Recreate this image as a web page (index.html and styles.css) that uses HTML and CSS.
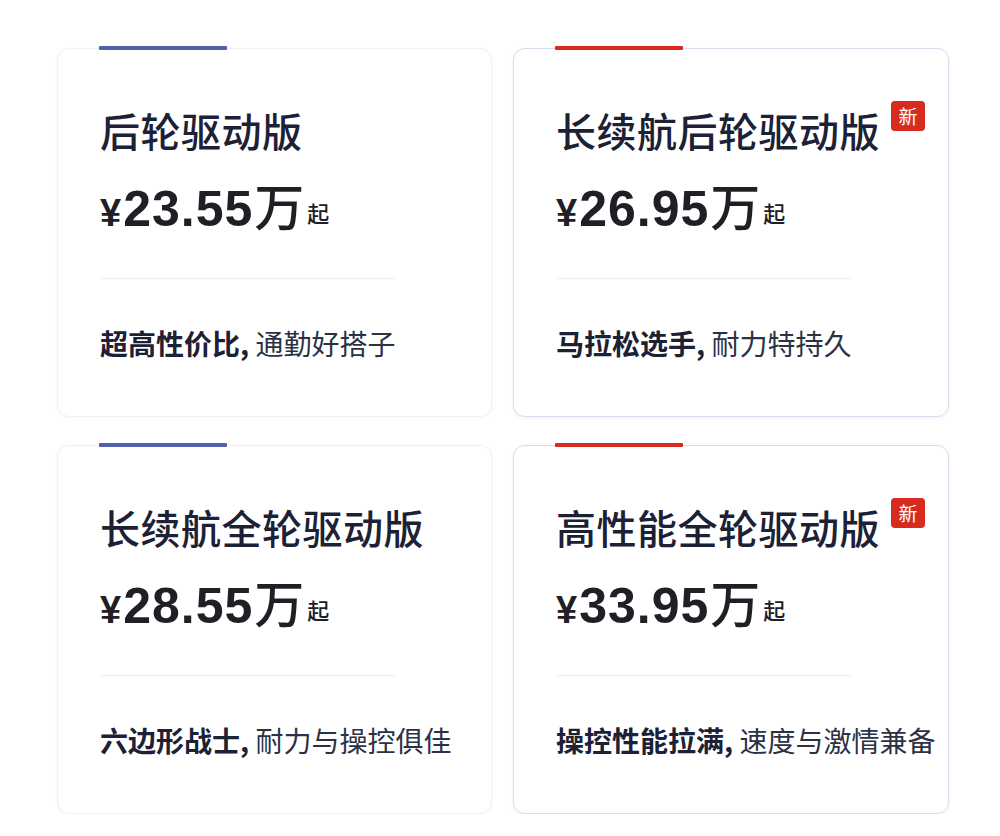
FILE: index.html
```html
<!DOCTYPE html>
<html lang="zh-CN">
<head>
<meta charset="utf-8">
<title>车型版本</title>
<link rel="stylesheet" href="styles.css">
</head>
<body>
<div class="grid">
  <div class="card card-plain">
    <span class="bar bar-blue"></span>
    <div class="title-row"><h2 class="title">后轮驱动版</h2></div>
    <div class="price"><span class="yen">¥</span><span class="num">23.55</span><span class="wan">万</span><span class="qi">起</span></div>
    <div class="divider"></div>
    <p class="desc"><b>超高性价比,</b> 通勤好搭子</p>
  </div>
  <div class="card card-active">
    <span class="bar bar-red"></span>
    <div class="title-row"><h2 class="title">长续航后轮驱动版</h2><span class="badge">新</span></div>
    <div class="price"><span class="yen">¥</span><span class="num">26.95</span><span class="wan">万</span><span class="qi">起</span></div>
    <div class="divider"></div>
    <p class="desc"><b>马拉松选手,</b> 耐力特持久</p>
  </div>
  <div class="card card-plain">
    <span class="bar bar-blue"></span>
    <div class="title-row"><h2 class="title">长续航全轮驱动版</h2></div>
    <div class="price"><span class="yen">¥</span><span class="num">28.55</span><span class="wan">万</span><span class="qi">起</span></div>
    <div class="divider"></div>
    <p class="desc"><b>六边形战士,</b> 耐力与操控俱佳</p>
  </div>
  <div class="card card-active">
    <span class="bar bar-red"></span>
    <div class="title-row"><h2 class="title">高性能全轮驱动版</h2><span class="badge">新</span></div>
    <div class="price"><span class="yen">¥</span><span class="num">33.95</span><span class="wan">万</span><span class="qi">起</span></div>
    <div class="divider"></div>
    <p class="desc"><b>操控性能拉满,</b> 速度与激情兼备</p>
  </div>
</div>
</body>
</html>
```

FILE: styles.css
```css
* { box-sizing: border-box; }

html, body {
  margin: 0;
  padding: 0;
  background: #ffffff;
}

body {
  font-family: "Noto Sans CJK SC", "Liberation Sans", sans-serif;
  color: #1e2336;
}

.grid {
  display: grid;
  grid-template-columns: 435px 436px;
  grid-auto-rows: 369px;
  column-gap: 21px;
  row-gap: 28px;
  padding: 48px 0 0 57px;
}

.card {
  position: relative;
  background: #ffffff;
  border-radius: 12px;
  padding: 57px 0 0 42px;
}

.card-plain {
  border: 1px solid #eff0f5;
  box-shadow: 0 1px 4px rgba(30, 40, 80, 0.03);
}

.card-active {
  border: 1px solid #d9dcec;
  box-shadow: 0 1px 4px rgba(30, 40, 80, 0.06);
}

.bar {
  position: absolute;
  top: -3px;
  left: 41px;
  width: 128px;
  height: 4px;
  border-radius: 1px;
}

.bar-blue { background: #5160aa; }
.bar-red { background: #d72a20; }

.title-row {
  display: flex;
  align-items: flex-start;
  gap: 11px;
  height: 48px;
}

.title {
  margin: 0;
  font-size: 40px;
  line-height: 48px;
  font-weight: 500;
  letter-spacing: 0.5px;
  color: #1c2135;
  white-space: nowrap;
}

.badge {
  margin-top: -5px;
  width: 34px;
  height: 30px;
  border-radius: 4px;
  background: #d72b1f;
  color: #ffffff;
  font-size: 19px;
  line-height: 30px;
  text-align: center;
}

.price {
  display: flex;
  align-items: baseline;
  height: 60px;
  margin-top: 20px;
  color: #1e2026;
}

.yen {
  font-family: "Liberation Sans", sans-serif;
  font-weight: 700;
  font-size: 38px;
  line-height: 60px;
}

.num {
  font-family: "Liberation Sans", sans-serif;
  font-weight: 700;
  font-size: 50px;
  line-height: 60px;
  letter-spacing: 1px;
  margin-left: 2px;
}

.wan {
  font-size: 50px;
  font-weight: 500;
  line-height: 60px;
  margin-left: 1px;
}

.qi {
  font-size: 22px;
  font-weight: 500;
  line-height: 60px;
  margin-left: 3px;
  transform: translateY(-4px);
}

.divider {
  width: 296px;
  height: 1px;
  background: #eceef3;
  margin-top: 44px;
}

.desc {
  margin: 44px 0 0;
  font-size: 28px;
  line-height: 40px;
  color: #2c3144;
  white-space: nowrap;
}

.desc b {
  font-weight: 700;
  color: #1c2135;
}
```
